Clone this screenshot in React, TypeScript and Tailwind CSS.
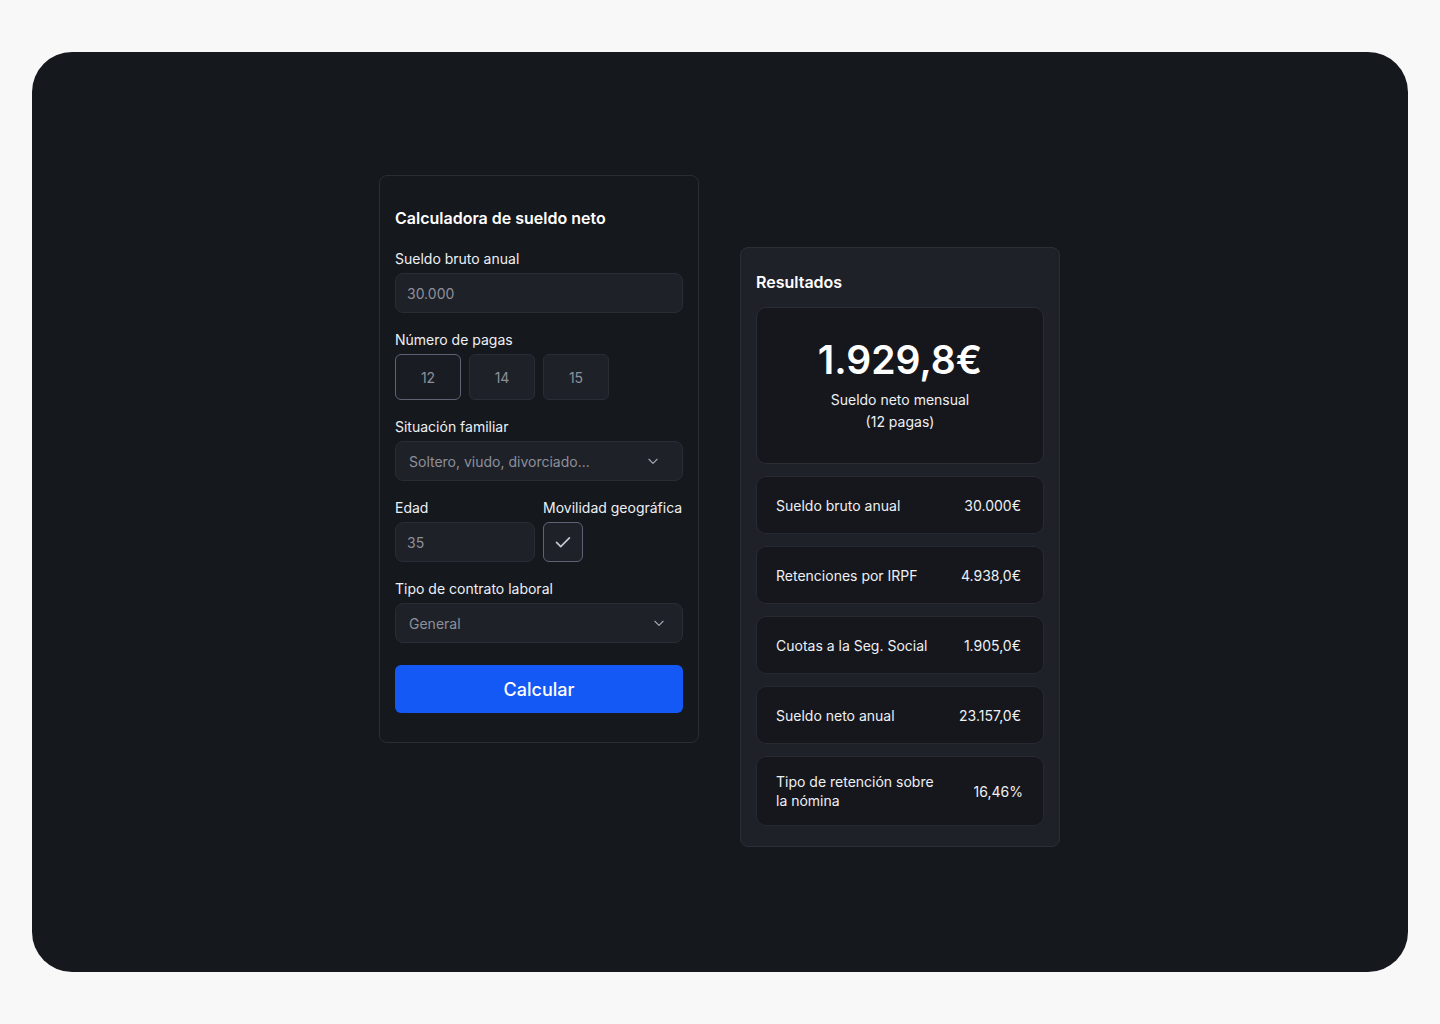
import React from "react";

const Chevron = () => (
  <svg width="14" height="14" viewBox="0 0 24 24" fill="none" stroke="#a3a6b0" strokeWidth="2" strokeLinecap="round" strokeLinejoin="round">
    <path d="M5 9l7 7 7-7" />
  </svg>
);

const Row = ({ label, value }: { label: React.ReactNode; value: string }) => (
  <div className="flex items-center justify-between rounded-[10px] border border-[#272a33] bg-[#15171c] pl-[19px] pr-[22px] h-[58px] text-[14px] text-[#eef0f4]">
    <span>{label}</span>
    <span>{value}</span>
  </div>
);

export default function App() {
  return (
    <div className="min-h-[1024px] w-[1440px] bg-[#f8f8f8] pt-[52px] px-[32px]" style={{ fontFamily: "Inter, 'Noto Sans', sans-serif" }}>
      <div className="h-[920px] rounded-[40px] bg-[#15181d] flex items-start justify-start pl-[347px] gap-[41px] pt-[123px]">
        {/* Left card */}
        <div className="w-[320px] rounded-[8px] border border-[#2a2d35] bg-[#15181d] px-[15px] pt-[30px] pb-[29px]">
          <h2 className="text-[16px] leading-[24px] font-semibold text-white">Calculadora de sueldo neto</h2>
          <div className="mt-[19px] text-[14px] leading-[20px] text-[#eef0f4]">Sueldo bruto anual</div>
          <div className="mt-[4px] h-[40px] rounded-[8px] border border-[#2a2d36] bg-[#1f2129] px-[11px] flex items-center text-[14px] text-[#8d909a]">30.000</div>

          <div className="mt-[17px] text-[14px] leading-[20px] text-[#eef0f4]">Número de pagas</div>
          <div className="mt-[4px] flex gap-[8px]">
            <div className="w-[66px] h-[46px] rounded-[6px] border border-[#5f6275] bg-[#1a1c23] flex items-center justify-center text-[14px] text-[#8d909a]">12</div>
            <div className="w-[66px] h-[46px] rounded-[6px] border border-[#2a2d36] bg-[#1f2129] flex items-center justify-center text-[14px] text-[#8d909a]">14</div>
            <div className="w-[66px] h-[46px] rounded-[6px] border border-[#2a2d36] bg-[#1f2129] flex items-center justify-center text-[14px] text-[#8d909a]">15</div>
          </div>

          <div className="mt-[17px] text-[14px] leading-[20px] text-[#eef0f4]">Situación familiar</div>
          <div className="mt-[4px] h-[40px] rounded-[8px] border border-[#2a2d36] bg-[#1f2129] pl-[13px] pr-[22px] flex items-center justify-between text-[14px] text-[#8d909a]">
            <span>Soltero, viudo, divorciado...</span>
            <Chevron />
          </div>

          <div className="mt-[17px] grid grid-cols-2 gap-x-[8px]">
            <div>
              <div className="text-[14px] leading-[20px] text-[#eef0f4]">Edad</div>
              <div className="mt-[4px] h-[40px] rounded-[8px] border border-[#2a2d36] bg-[#1f2129] px-[11px] flex items-center text-[14px] text-[#8d909a]">35</div>
            </div>
            <div>
              <div className="text-[14px] leading-[20px] text-[#eef0f4] whitespace-nowrap">Movilidad geográfica</div>
              <div className="mt-[4px] w-[40px] h-[40px] rounded-[6px] border border-[#5f6275] bg-[#1f2129] flex items-center justify-center">
                <svg width="22" height="22" viewBox="0 0 24 24" fill="none" stroke="#c4c6d0" strokeWidth="1.8" strokeLinecap="round" strokeLinejoin="round">
                  <path d="M5 12.5l4.5 4.5L19 7.5" />
                </svg>
              </div>
            </div>
          </div>

          <div className="mt-[17px] text-[14px] leading-[20px] text-[#eef0f4]">Tipo de contrato laboral</div>
          <div className="mt-[4px] h-[40px] rounded-[8px] border border-[#2a2d36] bg-[#1f2129] pl-[13px] pr-[16px] flex items-center justify-between text-[14px] text-[#8d909a]">
            <span>General</span>
            <Chevron />
          </div>

          <button className="mt-[22px] w-full h-[48px] rounded-[6px] bg-[#1458f6] text-white text-[18px] font-medium">Calcular</button>
        </div>

        {/* Right card */}
        <div className="mt-[72px] w-[320px] rounded-[8px] border border-[#2b2e37] bg-[#1f2129] px-[15px] pt-[22px] pb-[20px]">
          <h2 className="text-[16px] leading-[24px] font-semibold text-white">Resultados</h2>
          <div className="mt-[13px] h-[157px] rounded-[10px] border border-[#2a2d36] bg-[#15171c] flex flex-col items-center pt-[28px]">
            <div className="text-[39px] leading-[48px] font-semibold text-white">1.929,8€</div>
            <div className="mt-[5px] text-[14px] leading-[22px] text-[#eef0f4] text-center">
              Sueldo neto mensual
              <br />
              (12 pagas)
            </div>
          </div>
          <div className="mt-[12px] flex flex-col gap-[12px]">
            <Row label="Sueldo bruto anual" value="30.000€" />
            <Row label="Retenciones por IRPF" value="4.938,0€" />
            <Row label="Cuotas a la Seg. Social" value="1.905,0€" />
            <Row label="Sueldo neto anual" value="23.157,0€" />
            <div className="flex items-center justify-between rounded-[10px] border border-[#272a33] bg-[#15171c] pl-[19px] pr-[20px] h-[70px] text-[14px] leading-[19px] text-[#eef0f4]">
              <span className="w-[170px]">Tipo de retención sobre la nómina</span>
              <span>16,46%</span>
            </div>
          </div>
        </div>
      </div>
    </div>
  );
}
